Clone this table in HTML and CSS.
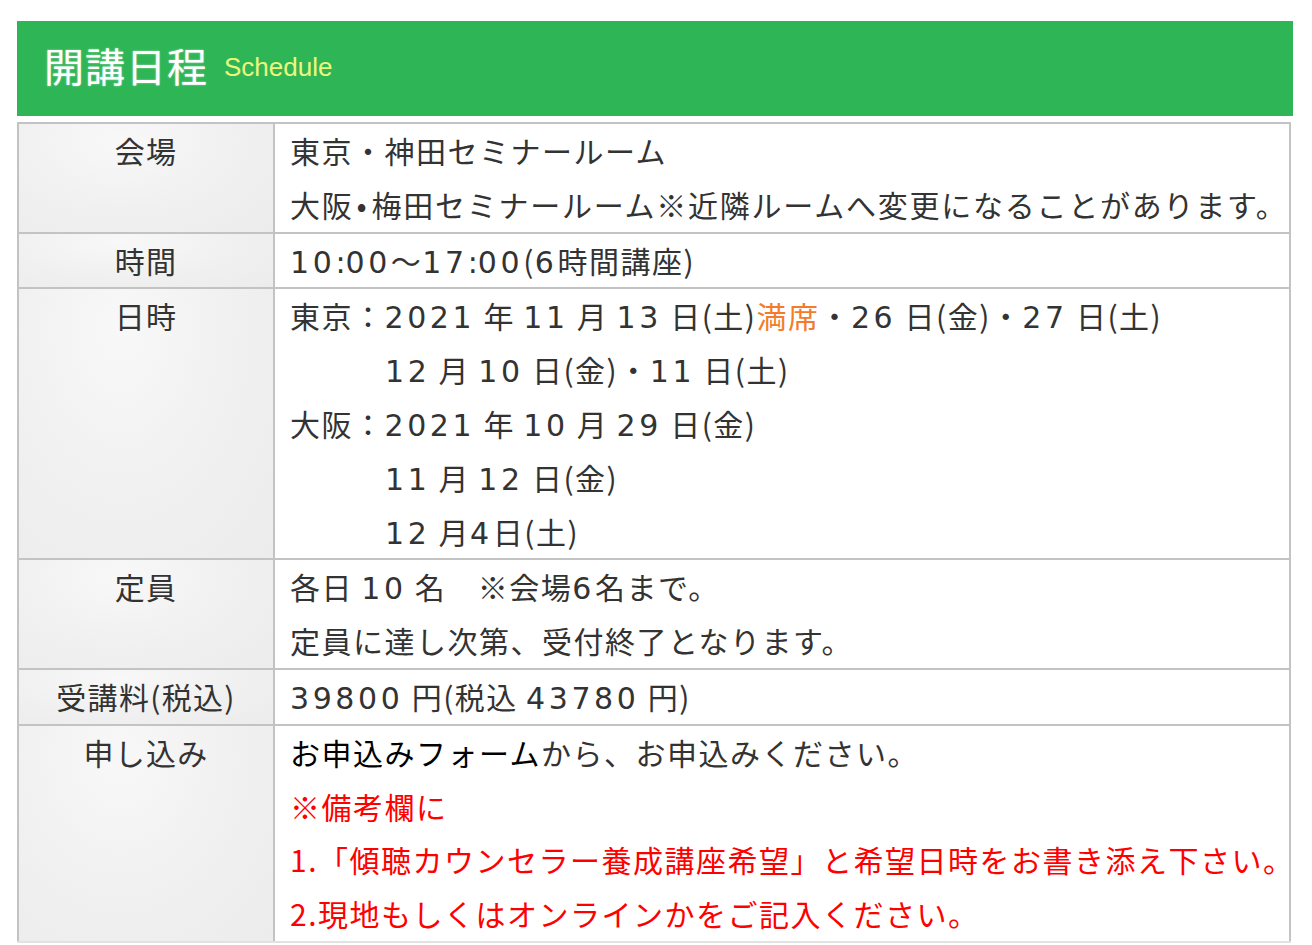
FILE: index.html
```html
<!DOCTYPE html>
<html lang="ja">
<head>
<meta charset="utf-8">
<link rel="stylesheet" href="styles.css">
</head>
<body>
<div class="wrap">
  <h2 class="heading"><span class="heading-ja">開講日程</span><span class="heading-en">Schedule</span></h2>
  <table class="schedule">
    <colgroup><col class="col-label"><col></colgroup>
    <tr>
      <th>会場</th>
      <td>東京・神田セミナールーム<br><span class="tight">大阪<span class="dot">•</span>梅田セミナールーム※近隣ルームへ変更になることがあります。</span></td>
    </tr>
    <tr>
      <th>時間</th>
      <td><span class="num">10<span class="colon">:</span>00</span>～<span class="num">17<span class="colon">:</span>00</span>(<span class="num">6</span>時間講座)</td>
    </tr>
    <tr>
      <th>日時</th>
      <td>東京：<span class="num">2021</span> 年 <span class="num">11</span> 月 <span class="num">13</span> 日(土)<span class="full">満席</span>・<span class="num">26</span> 日(金)・<span class="num">27</span> 日(土)<br>
        <span class="indent"><span class="num">12</span> 月 <span class="num">10</span> 日(金)・<span class="num">11</span> 日(土)</span><br>
        大阪：<span class="num">2021</span> 年 <span class="num">10</span> 月 <span class="num">29</span> 日(金)<br>
        <span class="indent"><span class="num">11</span> 月 <span class="num">12</span> 日(金)</span><br>
        <span class="indent"><span class="num">12</span> 月<span class="num">4</span>日(土)</span></td>
    </tr>
    <tr>
      <th>定員</th>
      <td>各日 <span class="num">10</span> 名　※会場<span class="num">6</span>名まで。<br>定員に達し次第、受付終了となります。</td>
    </tr>
    <tr>
      <th>受講料(税込)</th>
      <td><span class="num">39800</span> 円(税込 <span class="num">43780</span> 円)</td>
    </tr>
    <tr class="last">
      <th>申し込み</th>
      <td><span class="dark">お申込みフォーム</span>から、お申込みください。<br>
        <span class="note">※備考欄に</span><br>
        <span class="note">1.「傾聴カウンセラー養成講座希望」と希望日時をお書き添え下さい。</span><br>
        <span class="note">2.現地もしくはオンラインかをご記入ください。</span></td>
    </tr>
  </table>
</div>
</body>
</html>
```

FILE: styles.css
```css
html, body {
  margin: 0;
  padding: 0;
  background: #fff;
}

body {
  font-family: "Noto Sans CJK JP", "Noto Sans", sans-serif;
  color: #333;
}

.wrap {
  width: 1276px;
  margin: 21px 0 0 17px;
}

.heading {
  margin: 0 0 6px;
  height: 95px;
  background: #2eb556;
  display: flex;
  align-items: center;
  padding: 0 0 8px 27px;
  box-sizing: border-box;
  font-weight: normal;
}

.heading-ja {
  font-size: 40px;
  line-height: 1;
  color: #fff;
  letter-spacing: 1px;
  text-shadow: 0 0 2px rgba(255, 255, 255, 0.6);
}

.heading-en {
  font-family: "Liberation Sans", Arial, sans-serif;
  font-size: 26px;
  color: #eef77c;
  margin-left: 16px;
  margin-top: 6px;
}

.schedule {
  width: 1274px;
  border-collapse: collapse;
  table-layout: fixed;
  font-size: 30px;
  line-height: 53.8px;
  letter-spacing: 1.5px;
}

.col-label {
  width: 256px;
}

.schedule th,
.schedule td {
  border: 2px solid #c3c3c3;
  vertical-align: top;
  padding: 0;
}

.schedule th {
  font-weight: normal;
  text-align: center;
  letter-spacing: 1.3px;
  background: radial-gradient(ellipse at 40% 15%, #f8f8f8 0%, #f0f0f0 55%, #ececec 100%);
  color: #333;
}

.schedule td {
  padding-left: 15px;
  background: #fff;
  white-space: nowrap;
}

.schedule .last th,
.schedule .last td {
  border-bottom-color: #e2e2e2;
}

.tight {
  letter-spacing: 1.75px;
}

.dot {
  padding: 0 3px;
}

.num {
  font-family: "DejaVu Sans", "Noto Sans CJK JP", sans-serif;
  line-height: 1;
  letter-spacing: 3.6px;
}

.colon {
  letter-spacing: 0;
}

.indent {
  padding-left: 95px;
}

.full {
  color: #f37b2b;
}

.dark {
  color: #000;
}

.note {
  color: #ff0000;
}
```
